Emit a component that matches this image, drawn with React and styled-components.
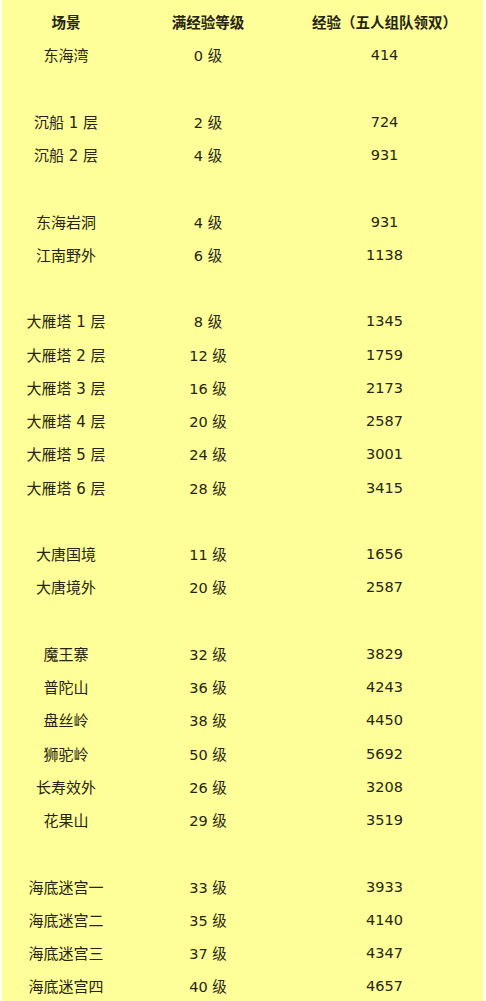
import styled, { createGlobalStyle } from "styled-components";

const GlobalStyle = createGlobalStyle`
  html, body {
    margin: 0;
    padding: 0;
    background: #fffff0;
  }
  body {
    font-family: "DejaVu Sans", "Noto Sans CJK SC", sans-serif;
    color: #26240f;
  }
`;

const rows = [
  ["东海湾", "0 级", "414"],
  null,
  ["沉船 1 层", "2 级", "724"],
  ["沉船 2 层", "4 级", "931"],
  null,
  ["东海岩洞", "4 级", "931"],
  ["江南野外", "6 级", "1138"],
  null,
  ["大雁塔 1 层", "8 级", "1345"],
  ["大雁塔 2 层", "12 级", "1759"],
  ["大雁塔 3 层", "16 级", "2173"],
  ["大雁塔 4 层", "20 级", "2587"],
  ["大雁塔 5 层", "24 级", "3001"],
  ["大雁塔 6 层", "28 级", "3415"],
  null,
  ["大唐国境", "11 级", "1656"],
  ["大唐境外", "20 级", "2587"],
  null,
  ["魔王寨", "32 级", "3829"],
  ["普陀山", "36 级", "4243"],
  ["盘丝岭", "38 级", "4450"],
  ["狮驼岭", "50 级", "5692"],
  ["长寿效外", "26 级", "3208"],
  ["花果山", "29 级", "3519"],
  null,
  ["海底迷宫一", "33 级", "3933"],
  ["海底迷宫二", "35 级", "4140"],
  ["海底迷宫三", "37 级", "4347"],
  ["海底迷宫四", "40 级", "4657"],
];

const Sheet = styled.div`
  margin: 0 3px 0 2px;
  padding-top: 5px;
  background: #ffff99;
  min-height: 1001px;
  box-sizing: border-box;
`;

const Row = styled.div`
  display: grid;
  grid-template-columns: 128px 156px 1fr;
  height: 33.25px;
  align-items: center;
`;

const Cell = styled.div`
  text-align: center;
  font-size: ${(p) => p.$size || "14.5px"};
  font-weight: 400;
  white-space: nowrap;
  padding-top: ${(p) => p.$shift || "0"};
`;

const HeadCell = styled(Cell)`
  font-family: "Noto Sans CJK SC", sans-serif;
  font-weight: 700;
`;

export default function App() {
  return (
    <>
      <GlobalStyle />
      <Sheet>
        <Row>
          <HeadCell>场景</HeadCell>
          <HeadCell>满经验等级</HeadCell>
          <HeadCell>经验（五人组队领双）</HeadCell>
        </Row>
        {rows.map((r, i) =>
          r ? (
            <Row key={i}>
              <Cell $size="15px">{r[0]}</Cell>
              <Cell $size="14.5px">{r[1]}</Cell>
              <Cell $size="14.5px" $shift="1px">{r[2]}</Cell>
            </Row>
          ) : (
            <Row key={i} />
          )
        )}
      </Sheet>
    </>
  );
}
